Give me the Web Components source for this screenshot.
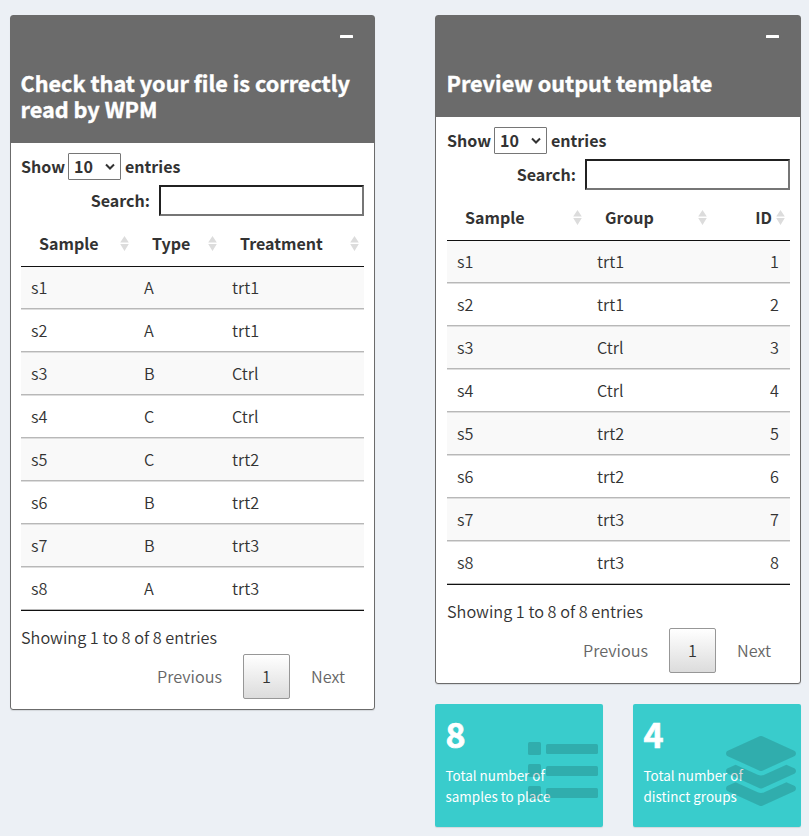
<!DOCTYPE html>
<html lang="en"><head><meta charset="utf-8"><title>WPM</title>
<style>
body{margin:0;background:#ecf0f5;color:#333;font-family:"Noto Sans CJK SC","Noto Sans",sans-serif;font-size:16.25px;line-height:25px}
</style></head><body>
<wpm-page>
  <wpm-panel slot="left" heading="Check that your file is correctly read by WPM"><wpm-table kind="input"></wpm-table></wpm-panel>
  <wpm-panel slot="right" class="inset" heading="Preview output template"><wpm-table kind="output"></wpm-table></wpm-panel>
  <wpm-stat slot="stats" value="8" icon="list">Total number of samples to place</wpm-stat>
  <wpm-stat slot="stats" value="4" icon="layers">Total number of distinct groups</wpm-stat>
</wpm-page>
<script>
class Base extends HTMLElement{
  connectedCallback(){ if(!this.shadowRoot) this.attachShadow({mode:'open'}).innerHTML=this.view(); }
}
customElements.define('wpm-page',class extends Base{
  view(){return `<style>
  :host{display:grid;grid-template-columns:365px 366px;gap:60px;padding:15px 0 0 10px;height:821px;align-items:start;overflow:hidden}
  .stats{display:grid;grid-template-columns:168px 168px;gap:30px;margin-top:20px}
  </style><slot name="left"></slot><div><slot name="right"></slot><div class="stats"><slot name="stats"></slot></div></div>`}
});
customElements.define('wpm-panel',class extends Base{
  view(){return `<style>
  :host{display:block;box-sizing:border-box;border:1px solid #6b6b6b;border-radius:3px;background:#fff;box-shadow:0 1px 1px rgba(0,0,0,.1);--inset:10px}
  :host(.inset){--inset:11px}
  header{background:#6b6b6b;color:#fff;padding:19px 10px 21px var(--inset)}
  .tools{display:flex;justify-content:flex-end;padding-right:11px;height:35px}
  .tools i{width:13px;height:3px;background:#fff;border-radius:.5px}
  h3{margin:0 0 0 -.5px;font-size:21.65px;line-height:26px;font-weight:700;-webkit-text-stroke:.4px #fff}
  .body{padding:10px 10px 10px var(--inset)}
  </style><header><div class="tools"><i></i></div><h3>${this.getAttribute('heading')}</h3></header><div class="body"><slot></slot></div>`}
});
const TABLES={
  input:{cols:['Sample','Type','Treatment'],w:[113,88,142],rows:['s1 A trt1','s2 A trt1','s3 B Ctrl','s4 C Ctrl','s5 C trt2','s6 B trt2','s7 B trt3','s8 A trt3']},
  output:{cols:['Sample','Group','ID'],w:[140,125,78],num:1,rows:['s1 trt1 1','s2 trt1 2','s3 Ctrl 3','s4 Ctrl 4','s5 trt2 5','s6 trt2 6','s7 trt3 7','s8 trt3 8']}
};
customElements.define('wpm-table',class extends Base{
  view(){const t=TABLES[this.getAttribute('kind')];
  const sort='<svg width="9" height="15" viewBox="0 0 9 15"><path d="M4.5 0L8.8 6.6H.2zM4.5 15L8.8 8H.2z" fill="#dcdcdc"/></svg>';
  return `<style>
  :host{display:block;font-weight:350}
  .len,.search{display:flex;align-items:center;font-weight:700;font-size:16.05px}
  .len{height:27px;gap:4px}
  .sel{box-sizing:border-box;width:53px;height:27px;margin-left:-1px;border:1px solid #767676;border-radius:1px;padding:0 4px 0 5px;display:flex;justify-content:space-between;align-items:center}
  .search{justify-content:flex-end;gap:9px;margin-top:5px;height:31px}
  .field{box-sizing:border-box;width:205px;height:31px;border:2px solid;border-color:#212121 #767676 #767676 #212121;padding:0;margin:0;outline:0}
  .row{display:grid;grid-template-columns:${t.w.map(x=>x+'px').join(' ')}}
  .head{box-sizing:border-box;font-weight:700;font-size:16.05px;height:51px;padding-top:4px;align-items:center;border-bottom:1px solid #111}
  .head span{display:flex;justify-content:space-between;align-items:center;padding:0 5px 0 18px}
  .head.num span:last-child{justify-content:flex-end;gap:4px}
  .cells{box-sizing:border-box;height:43px;line-height:41px;border-bottom:1px solid #b8b8b8;border-top:1px solid #ddd}
  .cells:first-child{height:42px;border-top:0}
  .cells:nth-child(odd){background:#f9f9f9}
  .cells span{padding:0 10px}
  .num .cells span:last-child{text-align:right;padding-right:11px}
  .rows{border-bottom:1px solid #111}
  .info{margin-top:14px;height:26px}
  .pages{display:flex;justify-content:flex-end;align-items:center;color:#666;margin-top:3px;height:45px}
  .pages b{box-sizing:border-box;font-weight:inherit;color:#333;width:47px;height:45px;border:1px solid #979797;border-radius:2px;background:linear-gradient(#fff,#dcdcdc);display:grid;place-items:center;margin:0 21px}
  .pages :last-child{margin-right:19px}
  </style>
  <div class="len"><span>Show</span><div class="sel"><span>10</span><svg width="12" height="8" viewBox="0 0 12 8"><path d="M2 1.5l4 4 4-4" fill="none" stroke="#333" stroke-width="2"/></svg></div><span>entries</span></div>
  <div class="search"><span>Search:</span><input class="field" aria-label="Search"></div>
  <div class="row head ${t.num?'num':''}">${t.cols.map(c=>`<span>${c}${sort}</span>`).join('')}</div>
  <div class="rows ${t.num?'num':''}">${t.rows.map(r=>`<div class="row cells">${r.split(' ').map(c=>`<span>${c}</span>`).join('')}</div>`).join('')}</div>
  <div class="info">Showing 1 to 8 of 8 entries</div>
  <div class="pages"><span>Previous</span><b>1</b><span>Next</span></div>`}
});
const ICONS={
 list:'<g><rect x="0" y="0" width="13" height="13" rx="1.5"/><rect x="0" y="22" width="13" height="13" rx="1.5"/><rect x="0" y="44" width="13" height="13" rx="1.5"/><rect x="18" y="2" width="52" height="10" rx="1.5"/><rect x="18" y="24" width="52" height="10" rx="1.5"/><rect x="18" y="46" width="52" height="10" rx="1.5"/></g>',
 layers:'<path transform="scale(.1367)" d="M12.41 148.02l232.94 105.67c6.8 3.09 14.49 3.09 21.29 0l232.94-105.67c16.55-7.51 16.55-32.52 0-40.03L266.65 2.31a25.607 25.607 0 0 0-21.29 0L12.41 107.98c-16.55 7.51-16.55 32.53 0 40.04zm487.18 88.28l-58.09-26.33-161.64 73.27c-7.56 3.43-15.59 5.17-23.86 5.17s-16.29-1.74-23.86-5.17L70.51 209.97l-58.1 26.33c-16.55 7.5-16.55 32.5 0 40l232.94 105.59c6.8 3.08 14.49 3.08 21.29 0L499.59 276.3c16.55-7.5 16.55-32.5 0-40zm0 127.8l-57.87-26.23-161.86 73.37c-7.56 3.43-15.59 5.17-23.86 5.17s-16.29-1.74-23.86-5.17L70.29 337.87 12.41 364.1c-16.55 7.5-16.55 32.5 0 40l232.94 105.59c6.8 3.08 14.49 3.08 21.29 0L499.59 404.1c16.55-7.5 16.55-32.5 0-40z"/>'
};
customElements.define('wpm-stat',class extends Base{
  view(){const l=this.getAttribute('icon')==='list';return `<style>
  :host{display:block;box-sizing:border-box;position:relative;height:123px;padding:9px 10px 10px 10.5px;background:#39cccc;color:#fff;border-radius:2px;box-shadow:0 1px 1px rgba(0,0,0,.1)}
  h3{margin:0 0 10px;font-size:34px;line-height:42px;font-weight:700;-webkit-text-stroke:.7px #fff}
  p{margin:0;font-size:13.45px;line-height:21px;width:125px}
  svg{position:absolute;right:5px;top:${l?38:32}px;fill:rgba(0,0,0,.15)}
  </style><h3>${this.getAttribute('value')}</h3><p><slot></slot></p><svg width="70" height="${l?57:70}">${ICONS[l?'list':'layers']}</svg>`}
});
</script></body></html>
